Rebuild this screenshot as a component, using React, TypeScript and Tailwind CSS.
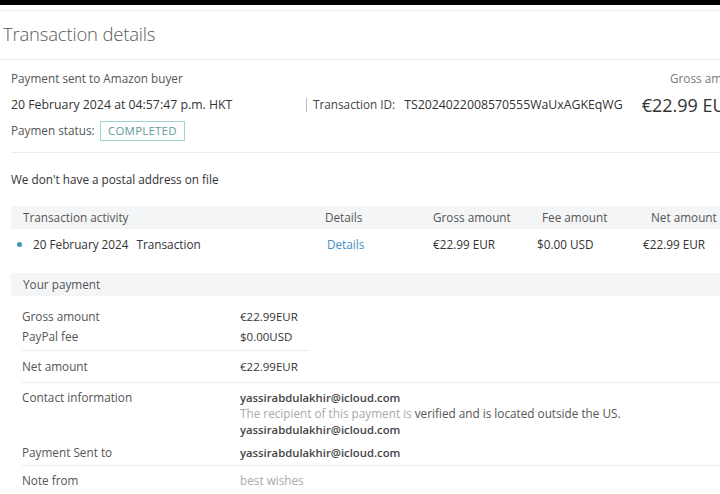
import React from 'react';

const activityCols = [
  { head: 'Details', w: 'w-[108px]' },
  { head: 'Gross amount', w: 'w-[109px]' },
  { head: 'Fee amount', w: 'w-[109px]' },
  { head: 'Net amount', w: 'w-[100px]' },
];

export default function App() {
  return (
    <div
      className="w-[720px] h-[494px] overflow-hidden bg-white text-[#444]"
      style={{ fontFamily: "'Open Sans', 'Noto Sans', sans-serif" }}
    >
      <div className="w-[800px]">
        {/* top black strip */}
        <div className="h-[5px] bg-black" />
        <div className="h-[6px] border-b border-[#eeeeee]" />

        {/* Title */}
        <div className="h-[49px] border-b border-[#ececec] pl-[3px] pt-[10px]">
          <h1 className="text-[18.5px] font-light text-[#5a5a5a] leading-[26px] tracking-[-0.2px]">
            Transaction details
          </h1>
        </div>

        {/* Summary */}
        <div className="px-[11px]">
          <div className="pt-[9px] pb-[11px] border-b border-[#ececec]">
            <div className="flex h-[20px] items-center text-[11.75px] text-[#555]">
              <span className="w-[659px]">Payment sent to Amazon buyer</span>
              <span className="text-[#777]">Gross amount</span>
            </div>
            <div className="flex h-[22px] items-center mt-[5px] text-[12.3px] text-[#333]">
              <span className="w-[295px]">20 February 2024 at 04:57:47 p.m. HKT</span>
              <span className="h-[14px] border-l border-[#bbb]" />
              <span className="pl-[6px] text-[11.75px] text-[#444]">Transaction ID:</span>
              <span className="ml-[9px] text-[12.3px] text-[#333]">TS2024022008570555WaUxAGKEqWG</span>
              <span className="ml-[19px] text-[18px] text-[#333] leading-none">€22.99 EUR</span>
            </div>
            <div className="flex h-[20px] items-center mt-[5px] text-[11.75px] text-[#555]">
              <span className="w-[89px]">Paymen status:</span>
              <span className="h-[20px] px-[7px] flex items-center border border-[#9fd6d3] text-[#5f9c9a] text-[11.5px] tracking-[0.2px]">
                COMPLETED
              </span>
            </div>
          </div>

          <div className="h-[53px] flex items-center text-[11.75px] text-[#333]">
            We don't have a postal address on file
          </div>

          {/* Transaction activity */}
          <div className="flex h-[23px] items-center bg-[#f4f5f7] text-[11.75px] text-[#555]">
            <span className="w-[302px] pl-[12px]">Transaction activity</span>
            {activityCols.map((c) => (
              <span key={c.head} className={`${c.w} pl-[12px]`}>
                {c.head}
              </span>
            ))}
          </div>
          <div className="flex h-[31px] items-center text-[11.75px] text-[#333]">
            <span className="w-[302px] flex items-center">
              <span className="ml-[6px] w-[5px] h-[5px] rounded-full bg-[#3a97bf]" />
              <span className="ml-[11px]">20 February 2024</span>
              <span className="ml-[8px]">Transaction</span>
            </span>
            <span className="w-[108px] pl-[14px] text-[#3f8fc4]">Details</span>
            <span className="w-[109px] pl-[12px]">€22.99 EUR</span>
            <span className="w-[109px] pl-[7px]">$0.00 USD</span>
            <span className="w-[100px] pl-[4px]">€22.99 EUR</span>
          </div>

          {/* Your payment */}
          <div className="mt-[13px] flex h-[23px] items-center bg-[#f4f5f7] pl-[12px] text-[11.75px] text-[#555]">
            Your payment
          </div>

          <div className="pl-[11px] text-[11.75px]">
            <div className="w-[288px] border-b border-[#ececec] pt-[11px] pb-[3px]">
              <div className="flex h-[20px] items-center">
                <span className="w-[218px] text-[#555]">Gross amount</span>
                <span className="text-[#333] text-[11.5px]">€22.99EUR</span>
              </div>
              <div className="flex h-[20px] items-center">
                <span className="w-[218px] text-[#555]">PayPal fee</span>
                <span className="text-[#333] text-[11.5px]">$0.00USD</span>
              </div>
            </div>
            <div className="border-b border-[#ececec] h-[32px] flex items-center">
              <span className="w-[218px] text-[#555]">Net amount</span>
              <span className="text-[#333] text-[11.5px]">€22.99EUR</span>
            </div>
            <div className="flex pt-[7px] pb-[4px]">
              <span className="w-[218px] text-[#555] leading-[15.5px]">Contact information</span>
              <div className="leading-[15.5px]">
                <div className="font-semibold text-[11.3px] text-[#444]">yassirabdulakhir@icloud.com</div>
                <div className="text-[#555]">
                  <span className="text-[#aaa]">The recipient of this payment is</span> verified and is located outside the US.
                </div>
                <div className="font-semibold text-[11.3px] text-[#444] mt-[1px]">yassirabdulakhir@icloud.com</div>
              </div>
            </div>
            <div className="flex h-[24px] items-center border-b border-[#ececec]">
              <span className="w-[218px] text-[#555]">Payment Sent to</span>
              <span className="font-semibold text-[11.3px] text-[#444]">yassirabdulakhir@icloud.com</span>
            </div>
            <div className="flex h-[30px] items-center">
              <span className="w-[218px] text-[#555]">Note from</span>
              <span className="text-[#aaa]">best wishes</span>
            </div>
          </div>
        </div>
      </div>
    </div>
  );
}
